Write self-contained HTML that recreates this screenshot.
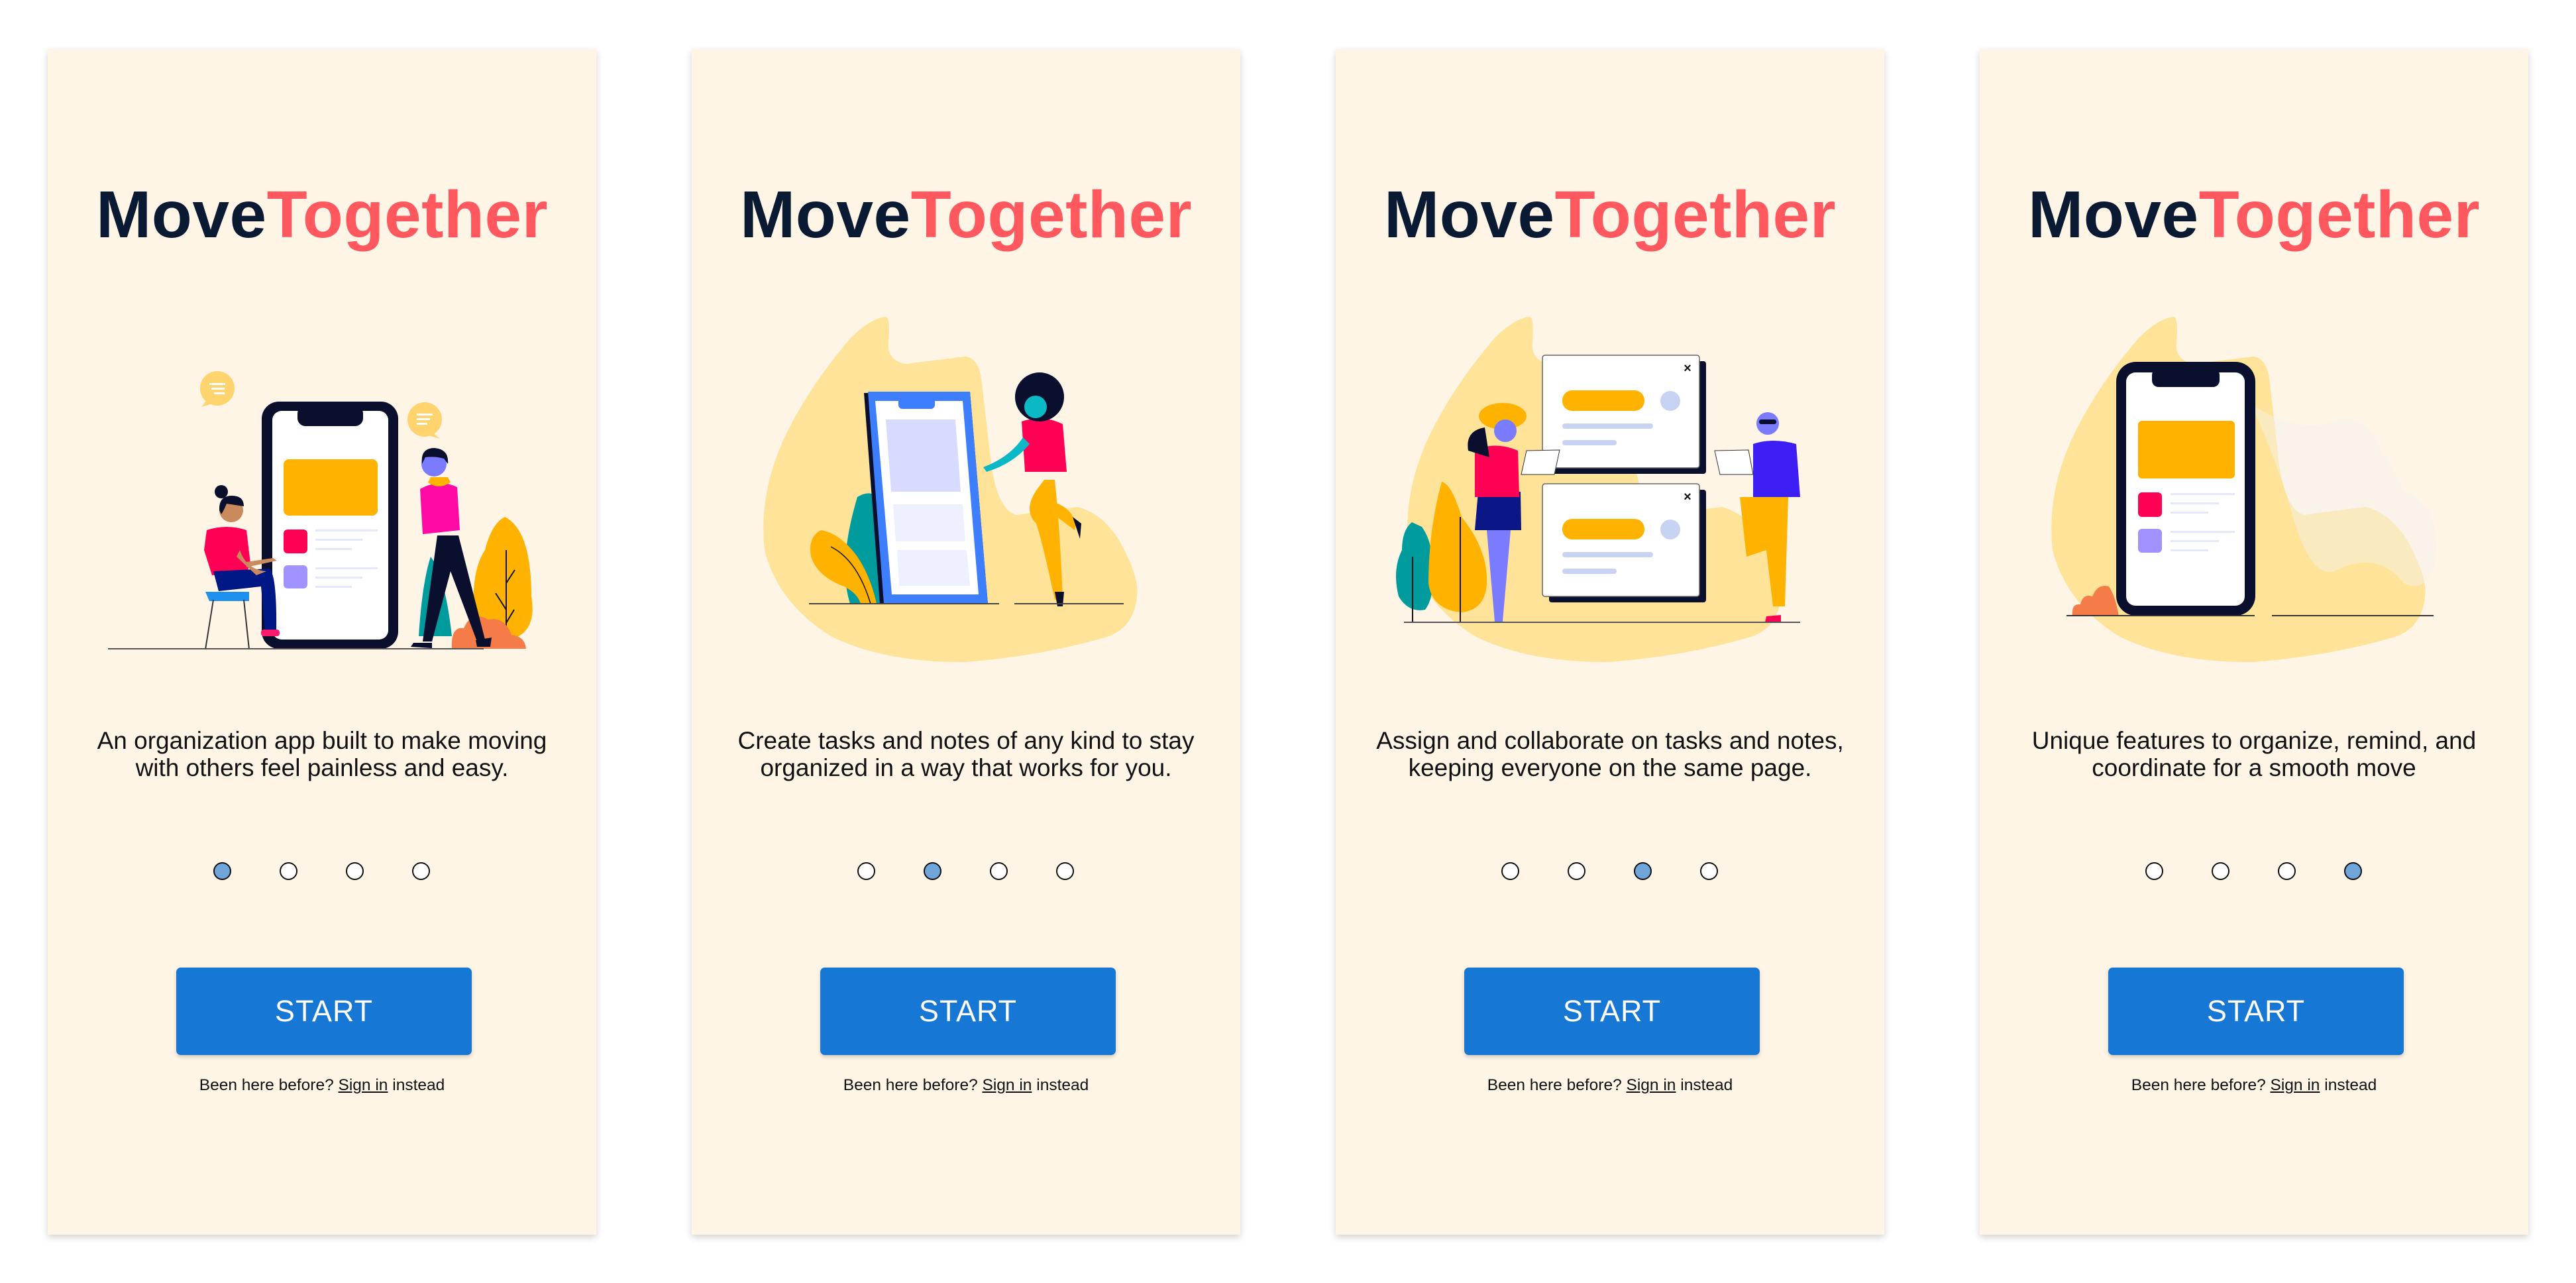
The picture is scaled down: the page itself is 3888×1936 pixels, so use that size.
<!DOCTYPE html>
<html><head><meta charset="utf-8">
<style>
*{margin:0;padding:0;box-sizing:border-box}
html,body{width:3888px;height:1936px;background:#fff;overflow:hidden;font-family:"Liberation Sans",sans-serif}
.p{position:absolute;top:74px;width:828px;height:1789px;background:#FEF5E7;box-shadow:0 4px 10px rgba(0,0,0,.18)}
.p svg{position:absolute;left:0;top:0}
.t{position:absolute;left:0;width:828px;top:200px;text-align:center;font-size:100px;font-weight:bold;line-height:100px;letter-spacing:0.5px;color:#0B1A33}
.t span{color:#FF585F}
.d{position:absolute;left:0;width:828px;top:1023px;text-align:center;font-size:37px;line-height:41px;color:#111}
.dots{position:absolute;top:1227px;left:0;width:828px}
.dots i{position:absolute;width:27px;height:27px;border-radius:50%;border:2.5px solid #111;background:#fff}
.dots i.a{background:#6FA5DA}
.b{position:absolute;left:194px;top:1386px;width:446px;height:132px;background:#1677D4;border-radius:7px;box-shadow:0 3px 6px rgba(0,0,0,.18);color:#fff;text-align:center;font-size:45px;line-height:132px;letter-spacing:1px}
.s{position:absolute;left:0;width:828px;top:1550px;text-align:center;font-size:24.5px;line-height:28px;color:#111}
.s u{text-decoration:underline}
</style></head><body>

<!-- Panel 1 -->
<div class="p" style="left:72px">
<svg width="828" height="1100" viewBox="0 74 828 1100">
 <circle cx="256" cy="586" r="26" fill="#FFD36E"/><path d="M240 604 L232 614 L252 608Z" fill="#FFD36E"/>
 <rect x="244" y="578" width="24" height="3" fill="#fff"/><rect x="247" y="585" width="20" height="3" fill="#fff"/><rect x="251" y="592" width="16" height="3" fill="#fff"/>
 <circle cx="569" cy="633" r="26" fill="#FFD36E"/><path d="M580 652 L592 662 L570 656Z" fill="#FFD36E"/>
 <rect x="557" y="624" width="24" height="3" fill="#fff"/><rect x="557" y="631" width="20" height="3" fill="#fff"/><rect x="557" y="638" width="16" height="3" fill="#fff"/>
 <path d="M578 840 Q600 870 610 960 L560 960 Q565 880 578 840Z" fill="#009B9C"/>
 <path d="M690 780 Q730 800 730 900 Q740 960 690 966 Q645 966 643 920 Q640 860 660 830 Q670 790 690 780Z" fill="#FFB300"/>
 <line x1="692" y1="830" x2="692" y2="979" stroke="#111" stroke-width="2"/>
 <path d="M692 880 L705 860 M692 920 L676 895 M692 940 L704 920" stroke="#111" stroke-width="2" fill="none"/>
 <rect x="323" y="606" width="206" height="373" rx="26" fill="#0B0F2E"/>
 <rect x="339" y="620" width="175" height="345" rx="14" fill="#fff"/>
 <rect x="377" y="612" width="99" height="31" rx="12" fill="#0B0F2E"/>
 <rect x="356" y="693" width="142" height="85" rx="8" fill="#FFB300"/>
 <rect x="356" y="799" width="36" height="36" rx="6" fill="#FF0055"/>
 <rect x="356" y="853" width="36" height="35" rx="6" fill="#A193FF"/>
 <g fill="#E5E8FA"><rect x="404" y="799" width="94" height="3"/><rect x="404" y="813" width="71" height="3"/><rect x="404" y="827" width="55" height="3"/><rect x="404" y="856" width="94" height="3"/><rect x="404" y="870" width="71" height="3"/><rect x="404" y="884" width="55" height="3"/></g>
 <path d="M610 979 Q608 945 628 948 Q640 920 665 935 Q690 930 700 958 Q720 960 722 979Z" fill="#F57C48"/>
 <path d="M238 893 L304 893 L304 907 L244 907Z" fill="#1E90F0"/>
 <path d="M250 905 L238 980 M296 905 L304 980" stroke="#333" stroke-width="2"/>
 <path d="M240 800 Q270 790 300 800 L306 850 L300 865 L248 868 L236 830Z" fill="#FF0055"/>
 <path d="M250 862 L335 858 Q346 870 345 952 L328 952 L322 885 L258 892Z" fill="#001786"/>
 <path d="M290 830 Q300 860 330 862 L315 868 L285 840Z" fill="#C98B5E"/>
 <path d="M300 848 L340 842 L346 846 L300 856Z" fill="#C98B5E"/>
 <rect x="322" y="950" width="28" height="10" rx="4" fill="#FF1A6E"/>
 <circle cx="277" cy="770" r="18" fill="#C98B5E"/>
 <path d="M259 770 Q258 748 278 748 Q296 748 296 764 L270 760 Q266 770 262 776Z" fill="#0B0F2E"/>
 <circle cx="262" cy="742" r="10" fill="#0B0F2E"/>
 <path d="M588 808 L620 808 L660 965 L648 968 L608 862 L580 968 L566 968Z" fill="#0B0F2E"/>
 <path d="M562 738 Q590 722 618 735 L622 800 L566 806Z" fill="#FF0AA5"/>
 <path d="M574 728 Q590 740 608 728 L604 720 L578 720Z" fill="#FFB300"/>
 <circle cx="583" cy="700" r="19" fill="#7B7BFF"/>
 <path d="M565 700 Q562 676 584 676 Q606 678 604 700 L598 692 Q584 688 570 690Z" fill="#0B0F2E"/>
 <path d="M552 970 L580 970 L580 978 L548 976Z M646 966 L670 962 L668 976 L648 976Z" fill="#0B0F2E"/>
 <line x1="91" y1="979" x2="658" y2="979" stroke="#555" stroke-width="2"/>
</svg>
<div class="t">Move<span>Together</span></div>
<div class="d">An organization app built to make moving<br>with others feel painless and easy.</div>
<div class="dots"><i class="a" style="left:250px"></i><i style="left:350px"></i><i style="left:450px"></i><i style="left:550px"></i></div>
<div class="b">START</div>
<div class="s">Been here before? <u>Sign in</u> instead</div>
</div>

<!-- Panel 2 -->
<div class="p" style="left:1044px">
<svg width="828" height="1100" viewBox="0 74 828 1100">
 <path id="blob" d="M293 478 Q300 480 297 517 Q295 545 324 549 Q380 542 413 538 Q432 540 437 570 Q445 640 452 700 Q462 770 490 777 Q540 770 583 765 Q620 775 645 815 Q676 870 672 900 Q668 945 630 960 Q530 990 413 999 Q290 1000 210 960 Q130 910 110 830 Q100 740 145 650 Q180 580 240 510 Q270 480 293 478Z" fill="#FEE399"/>
 <path d="M239 911 Q220 850 250 750 Q275 735 285 760 L285 911Z" fill="#009B9C"/>
 <path d="M279 911 Q270 870 250 840 Q225 805 195 800 Q175 810 180 840 Q190 870 230 885 Q250 895 255 911Z" fill="#FFB300"/>
 <path d="M210 825 Q250 845 270 911" stroke="#111" stroke-width="1.5" fill="none"/>
 <polygon points="260,593 420,591 447,911 284,911" fill="#0B0F2E"/>
 <polygon points="266,591 420,591 447,911 290,911" fill="#3D7EFF"/>
 <polygon points="277,605 409,605 433,897 302,897" fill="#fff"/>
 <rect x="312" y="600" width="55" height="17" rx="6" fill="#3D7EFF"/>
 <polygon points="293,633 398,633 406,742 301,742" fill="#D9DAFF"/>
 <polygon points="304,761 409,761 413,817 308,817" fill="#EEF0FF"/>
 <polygon points="310,830 415,830 420,884 313,884" fill="#EEF0FF"/>
 <path d="M532 724 L548 724 Q556 800 560 905 L548 905 Q530 820 520 790 Q500 770 520 740Z" fill="#FFB300"/>
 <path d="M536 756 Q570 760 580 790 L578 800 L554 782Z" fill="#FFB300"/>
 <path d="M498 636 Q530 625 560 640 L566 712 L503 712Z" fill="#FF0055"/>
 <path d="M500 660 Q480 690 440 705 L445 712 Q485 700 510 670Z" fill="#0BB8C5"/>
 <circle cx="525" cy="599" r="37" fill="#0B0F2E"/>
 <circle cx="519" cy="614" r="17" fill="#0BB8C5"/>
 <path d="M548 893 L562 893 L560 915 L552 915Z M575 780 L588 790 L586 813Z" fill="#0B0F2E"/>
 <line x1="177" y1="911" x2="464" y2="911" stroke="#444" stroke-width="2"/>
 <line x1="487" y1="911" x2="652" y2="911" stroke="#444" stroke-width="2"/>
</svg>
<div class="t">Move<span>Together</span></div>
<div class="d">Create tasks and notes of any kind to stay<br>organized in a way that works for you.</div>
<div class="dots"><i style="left:250px"></i><i class="a" style="left:350px"></i><i style="left:450px"></i><i style="left:550px"></i></div>
<div class="b">START</div>
<div class="s">Been here before? <u>Sign in</u> instead</div>
</div>

<!-- Panel 3 -->
<div class="p" style="left:2016px">
<svg width="828" height="1100" viewBox="0 74 828 1100">
 <use href="#blob"/>
 <path d="M115 788 Q100 800 100 830 Q85 860 95 900 Q110 925 135 920 Q150 900 145 860 Q148 820 130 795Z" fill="#009B9C"/>
 <path d="M160 727 Q175 730 190 780 Q230 830 228 880 Q226 920 190 924 Q145 920 140 880 Q140 800 160 727Z" fill="#FFB300"/>
 <line x1="116" y1="840" x2="116" y2="940" stroke="#111" stroke-width="2"/>
 <line x1="188" y1="780" x2="188" y2="940" stroke="#111" stroke-width="2"/>
 <rect x="322" y="545" width="237" height="170" rx="4" fill="#0B0F2E"/>
 <rect x="312" y="536" width="237" height="170" rx="4" fill="#fff" stroke="#666" stroke-width="1.5"/>
 <rect x="342" y="589" width="124" height="31" rx="15" fill="#FFB300"/>
 <circle cx="505" cy="605" r="15" fill="#C8D2F2"/>
 <rect x="342" y="639" width="137" height="8" rx="4" fill="#C8D2F2"/>
 <rect x="342" y="664" width="82" height="8" rx="4" fill="#C8D2F2"/>
 <text x="531" y="562" font-size="20" text-anchor="middle" font-weight="bold" fill="#111">×</text>
 <rect x="322" y="739" width="237" height="170" rx="4" fill="#0B0F2E"/>
 <rect x="312" y="730" width="237" height="170" rx="4" fill="#fff" stroke="#666" stroke-width="1.5"/>
 <rect x="342" y="783" width="124" height="31" rx="15" fill="#FFB300"/>
 <circle cx="505" cy="799" r="15" fill="#C8D2F2"/>
 <rect x="342" y="833" width="137" height="8" rx="4" fill="#C8D2F2"/>
 <rect x="342" y="858" width="82" height="8" rx="4" fill="#C8D2F2"/>
 <text x="531" y="756" font-size="20" text-anchor="middle" font-weight="bold" fill="#111">×</text>
 <path d="M228 800 L264 800 L252 938 L240 938Z" fill="#7B7BFF"/>
 <path d="M215 742 L279 742 L280 800 L210 800Z" fill="#0B1786"/>
 <path d="M210 680 Q240 665 275 680 L277 750 L210 750Z" fill="#FF0055"/>
 <path d="M200 680 Q195 650 225 645 L232 690Z" fill="#0B0F2E"/>
 <ellipse cx="252" cy="628" rx="36" ry="20" fill="#FFB300"/>
 <circle cx="256" cy="650" r="17" fill="#7B7BFF"/>
 <polygon points="288,680 338,679 330,716 280,716" fill="#fff" stroke="#333" stroke-width="1"/>
 <path d="M610 750 L683 750 L678 915 L660 915 L650 830 L620 840Z" fill="#FFB300"/>
 <path d="M630 670 Q660 660 695 670 L701 750 L630 750Z" fill="#3D1FF5"/>
 <circle cx="652" cy="639" r="17" fill="#7B7BFF"/>
 <rect x="639" y="633" width="26" height="7" rx="3" fill="#0B0F2E"/>
 <polygon points="572,680 623,679 630,716 580,716" fill="#fff" stroke="#333" stroke-width="1"/>
 <path d="M650 930 L672 928 L672 939 L648 939Z" fill="#FF0055"/>
 <line x1="103" y1="939" x2="701" y2="939" stroke="#555" stroke-width="2"/>
</svg>
<div class="t">Move<span>Together</span></div>
<div class="d">Assign and collaborate on tasks and notes,<br>keeping everyone on the same page.</div>
<div class="dots"><i style="left:250px"></i><i style="left:350px"></i><i class="a" style="left:450px"></i><i style="left:550px"></i></div>
<div class="b">START</div>
<div class="s">Been here before? <u>Sign in</u> instead</div>
</div>

<!-- Panel 4 -->
<div class="p" style="left:2988px">
<svg width="828" height="1100" viewBox="0 74 828 1100">
 <use href="#blob"/>
 <path d="M410 610 Q470 650 520 640 Q560 620 590 650 Q620 700 640 740 Q690 760 690 830 Q680 900 640 880 Q600 830 540 860 Q500 880 470 770 Q450 700 410 610Z" fill="#F6F1EE" opacity="0.45"/>
 <path d="M140 930 Q138 910 152 912 Q156 895 170 900 Q178 880 195 885 Q205 900 210 930Z" fill="#F57C48"/>
 <rect x="206" y="546" width="210" height="383" rx="30" fill="#0B0F2E"/>
 <rect x="221" y="562" width="179" height="352" rx="14" fill="#fff"/>
 <rect x="260" y="556" width="102" height="28" rx="10" fill="#0B0F2E"/>
 <rect x="239" y="635" width="146" height="87" rx="6" fill="#FFB300"/>
 <rect x="239" y="743" width="36" height="37" rx="6" fill="#FF0055"/>
 <rect x="239" y="798" width="36" height="36" rx="6" fill="#A193FF"/>
 <g fill="#E5E8FA"><rect x="288" y="744" width="97" height="3"/><rect x="288" y="758" width="73" height="3"/><rect x="288" y="772" width="57" height="3"/><rect x="288" y="801" width="97" height="3"/><rect x="288" y="815" width="73" height="3"/><rect x="288" y="829" width="57" height="3"/></g>
 <line x1="131" y1="929" x2="415" y2="929" stroke="#333" stroke-width="2"/>
 <line x1="441" y1="929" x2="685" y2="929" stroke="#333" stroke-width="2"/>
</svg>
<div class="t">Move<span>Together</span></div>
<div class="d">Unique features to organize, remind, and<br>coordinate for a smooth move</div>
<div class="dots"><i style="left:250px"></i><i style="left:350px"></i><i style="left:450px"></i><i class="a" style="left:550px"></i></div>
<div class="b">START</div>
<div class="s">Been here before? <u>Sign in</u> instead</div>
</div>

</body></html>
